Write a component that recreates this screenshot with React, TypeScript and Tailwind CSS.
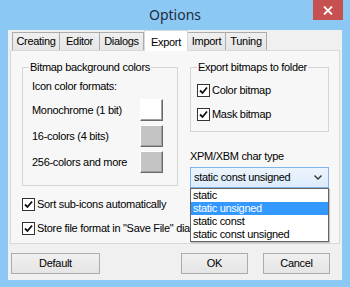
import React from "react";

const font = "font-['Liberation_Sans',Arial,sans-serif] text-[11px] tracking-[-0.3px] text-black";

function Check() {
  return (
    <span className="flex h-[13px] w-[13px] shrink-0 items-center justify-center border border-[#333] bg-white">
      <svg width="9" height="9" viewBox="0 0 9 9">
        <path d="M1 4.5 L3.5 7 L8 1.5" fill="none" stroke="#111" strokeWidth="1.8" />
      </svg>
    </span>
  );
}

function CheckRow({ label }: { label: string }) {
  return (
    <div className="flex h-[13px] items-center gap-[2px] whitespace-nowrap">
      <Check />
      <span className="leading-[13px]">{label}</span>
    </div>
  );
}

function Swatch({ color }: { color: string }) {
  return (
    <span
      className={`block h-[22px] w-[23px] border border-t-white border-l-white border-r-[#696969] border-b-[#696969] shadow-[inset_-1px_-1px_0_#a0a0a0] ${color}`}
    />
  );
}

function Button({ label, w }: { label: string; w: string }) {
  return (
    <button
      className={`flex h-[21px] items-center justify-center border border-[#acacac] bg-gradient-to-b from-[#f0f0f0] to-[#e5e5e5] ${w}`}
    >
      {label}
    </button>
  );
}

const tabs = [
  { label: "Creating", w: "w-[48px]" },
  { label: "Editor", w: "w-[41px]" },
  { label: "Dialogs", w: "w-[45px]" },
  { label: "Export", w: "w-[44px]", active: true },
  { label: "Import", w: "w-[39px]" },
  { label: "Tuning", w: "w-[42px]" },
];

export default function App() {
  return (
    <div className={`flex h-[287px] w-[350px] flex-col bg-[#8cc8f4] ${font}`}>
      {/* title bar */}
      <div className="grid h-[30px] grid-cols-[1fr_auto_1fr]">
        <div />
        <div className="pt-[5px] font-['Noto_Sans',sans-serif] text-[14px] leading-[20px] tracking-normal text-[#1f2d3d]">
          Options
        </div>
        <div className="flex justify-end pr-[7px]">
          <div className="flex h-[20px] w-[30px] items-center justify-center bg-[#c75050]">
            <svg width="10" height="9" viewBox="0 0 10 9">
              <path d="M1 0.5 L9 8.5 M9 0.5 L1 8.5" stroke="#fff" strokeWidth="1.8" />
            </svg>
          </div>
        </div>
      </div>

      {/* client area */}
      <div className="mx-[8px] flex h-[250px] flex-col bg-[#f0f0f0]">
        <div className="flex h-[20px] items-end pl-[4px]">
          {tabs.map((t) =>
            t.active ? (
              <div
                key={t.label}
                className={`relative z-10 -mb-px flex h-[21px] items-start justify-center border border-b-0 border-[#d9d9d9] bg-white pt-[3px] ${t.w}`}
              >
                {t.label}
              </div>
            ) : (
              <div
                key={t.label}
                className={`-ml-px flex h-[18px] items-center justify-center border border-b-0 border-[#acacac] bg-gradient-to-b from-[#f0f0f0] to-[#e5e5e5] first:ml-0 ${t.w}`}
              >
                {t.label}
              </div>
            ),
          )}
        </div>

        {/* panel */}
        <div className="ml-[2px] flex h-[194px] w-[330px] gap-[12px] border border-[#d9d9d9] bg-[#f7f7f7] pl-[11px] pt-[16px]">
          {/* left column */}
          <div className="flex w-[156px] flex-col">
            <div className="relative h-[119px] border border-[#d5d5d5] pl-[9px] pt-[12px]">
              <span className="absolute -top-[7px] left-[6px] bg-[#f7f7f7] px-px leading-[13px]">
                Bitmap background colors
              </span>
              <div className="leading-[13px]">Icon color formats:</div>
              <div className="mt-[6px] flex flex-col gap-[4px] pr-[14px]">
                <div className="flex h-[22px] items-center justify-between">
                  <span>Monochrome (1 bit)</span>
                  <Swatch color="bg-white" />
                </div>
                <div className="flex h-[22px] items-center justify-between">
                  <span>16-colors (4 bits)</span>
                  <Swatch color="bg-[#c4c4c4]" />
                </div>
                <div className="flex h-[22px] items-center justify-between">
                  <span>256-colors and more</span>
                  <Swatch color="bg-[#c4c4c4]" />
                </div>
              </div>
            </div>
            <div className="mt-[12px] flex flex-col gap-[11px]">
              <CheckRow label="Sort sub-icons automatically" />
              <CheckRow label='Store file format in "Save File" dialog' />
            </div>
          </div>

          {/* right column */}
          <div className="relative flex w-[139px] flex-col">
            <div className="relative flex h-[65px] flex-col gap-[11px] border border-[#d5d5d5] pl-[6px] pt-[16px]">
              <span className="absolute -top-[7px] left-[6px] bg-[#f7f7f7] px-px leading-[13px]">
                Export bitmaps to folder
              </span>
              <CheckRow label="Color bitmap" />
              <CheckRow label="Mask bitmap" />
            </div>
            <div className="mt-[18px] leading-[13px]">XPM/XBM char type</div>
            <div className="mt-[4px] flex h-[21px] items-center justify-between border border-[#7eb4ea] bg-gradient-to-b from-[#ecf4fc] to-[#dcecfc] pl-[3px] pr-[6px]">
              <span>static const unsigned</span>
              <svg width="8" height="5" viewBox="0 0 8 5">
                <path d="M0.5 0.5 L4 4 L7.5 0.5" fill="none" stroke="#333" strokeWidth="1.4" />
              </svg>
            </div>
            <div className="absolute left-0 top-[121px] z-20 w-[139px] border border-[#646464] bg-white shadow-[1px_1px_1px_rgba(0,0,0,0.2)]">
              <div className="h-[13px] pl-[2px] leading-[13px]">static</div>
              <div className="h-[13px] bg-[#3399ff] pl-[2px] leading-[13px] text-white">static unsigned</div>
              <div className="h-[13px] pl-[2px] leading-[13px]">static const</div>
              <div className="h-[13px] pl-[2px] leading-[13px]">static const unsigned</div>
            </div>
          </div>
        </div>

        {/* buttons */}
        <div className="mt-[9px] flex items-center pl-[3px] pr-[12px]">
          <Button label="Default" w="w-[89px]" />
          <div className="flex-1" />
          <Button label="OK" w="w-[67px]" />
          <div className="w-[15px]" />
          <Button label="Cancel" w="w-[67px]" />
        </div>
      </div>
    </div>
  );
}
